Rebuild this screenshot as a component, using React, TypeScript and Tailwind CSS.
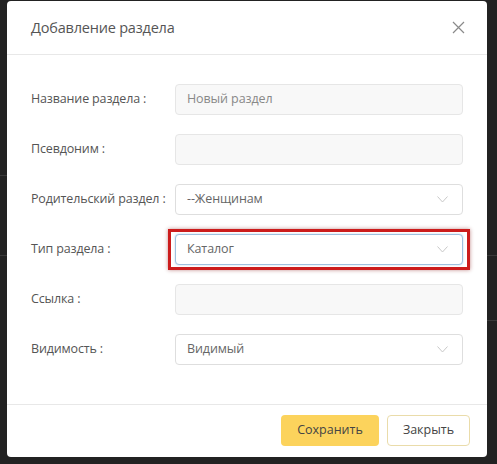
import React from "react";

const Chevron = () => (
  <svg width="11" height="7" viewBox="0 0 11 7" fill="none" className="shrink-0">
    <path d="M0.5 0.5 L5.5 6 L10.5 0.5" stroke="#c8c8c8" strokeWidth="1" />
  </svg>
);

type Row = { label: string; kind: "input" | "select"; value?: string; focus?: boolean };

const rows: Row[] = [
  { label: "Название раздела :", kind: "input", value: "Новый раздел" },
  { label: "Псевдоним :", kind: "input" },
  { label: "Родительский раздел :", kind: "select", value: "--Женщинам" },
  { label: "Тип раздела :", kind: "select", value: "Каталог", focus: true },
  { label: "Ссылка :", kind: "input" },
  { label: "Видимость :", kind: "select", value: "Видимый" },
];

function Field({ r }: { r: Row }) {
  if (r.kind === "input") {
    return (
      <div className="flex-1 h-[31px] rounded-[4px] border border-[#e6e6e6] bg-[#f8f8f8] flex items-center px-[11px] text-[12.5px] tracking-[-0.1px] text-[#888]">
        {r.value}
      </div>
    );
  }
  const box = (
    <div
      className={
        "flex-1 h-[31px] rounded-[4px] border bg-white flex items-center justify-between pl-[11px] pr-[14px] text-[12.5px] tracking-[-0.1px] text-[#666] " +
        (r.focus ? "border-[#9fc0de] shadow-[0_0_2px_rgba(120,160,210,0.5)]" : "border-[#dedede]")
      }
    >
      <span>{r.value}</span>
      <Chevron />
    </div>
  );
  if (r.focus) {
    return (
      <div className="flex-1 relative flex">
        <div className="absolute left-[-7px] right-[-7px] top-[-5px] bottom-[-5px] border-[3px] border-[#cc1c1c] shadow-[0_0_4px_rgba(120,0,0,0.45)] pointer-events-none" />
        {box}
      </div>
    );
  }
  return box;
}

export default function App() {
  return (
    <div
      className="relative w-[497px] h-[464px] bg-[#222222] overflow-hidden"
      style={{ fontFamily: '"Open Sans", "Noto Sans", sans-serif' }}
    >
      <div className="absolute left-0 top-[175px] w-[7px] h-px bg-[#3a3a3a]" />
      <div className="absolute left-0 top-[255px] w-[7px] h-px bg-[#3a3a3a]" />
      <div className="absolute right-0 top-[255px] w-[10px] h-px bg-[#3a3a3a]" />
      <div className="absolute right-0 top-[320px] w-[10px] h-px bg-[#3a3a3a]" />
      <div className="absolute left-[7px] top-[1px] w-[480px] h-[456px] bg-white rounded-[4px] flex flex-col">
        <div className="h-[54px] flex items-center justify-between pl-[24px] pr-[22px] border-b border-[#e8e8e8]">
          <span className="text-[14.5px] tracking-[-0.2px] text-[#555]">Добавление раздела</span>
          <svg width="13" height="13" viewBox="0 0 13 13" fill="none">
            <path d="M1 1 L12 12 M12 1 L1 12" stroke="#8a8a8a" strokeWidth="1.2" />
          </svg>
        </div>
        <div className="flex-1 flex flex-col gap-[19px] pt-[29px] pl-[24px] pr-[24px]">
          {rows.map((r) => (
            <div key={r.label} className="flex items-center">
              <div className="w-[144px] shrink-0 text-[12.5px] tracking-[-0.15px] text-[#555]">{r.label}</div>
              <Field r={r} />
            </div>
          ))}
        </div>
        <div className="h-[53px] border-t border-[#e8e8e8] flex items-center justify-end gap-[8px] pr-[17px] pb-[2px]">
          <button className="w-[98px] h-[31px] rounded-[4px] bg-[#fcd35c] text-[12.5px] text-[#444]">
            Сохранить
          </button>
          <button className="w-[83px] h-[31px] rounded-[4px] bg-white border border-[#eadcaa] text-[12.5px] text-[#444]">
            Закрыть
          </button>
        </div>
      </div>
    </div>
  );
}
